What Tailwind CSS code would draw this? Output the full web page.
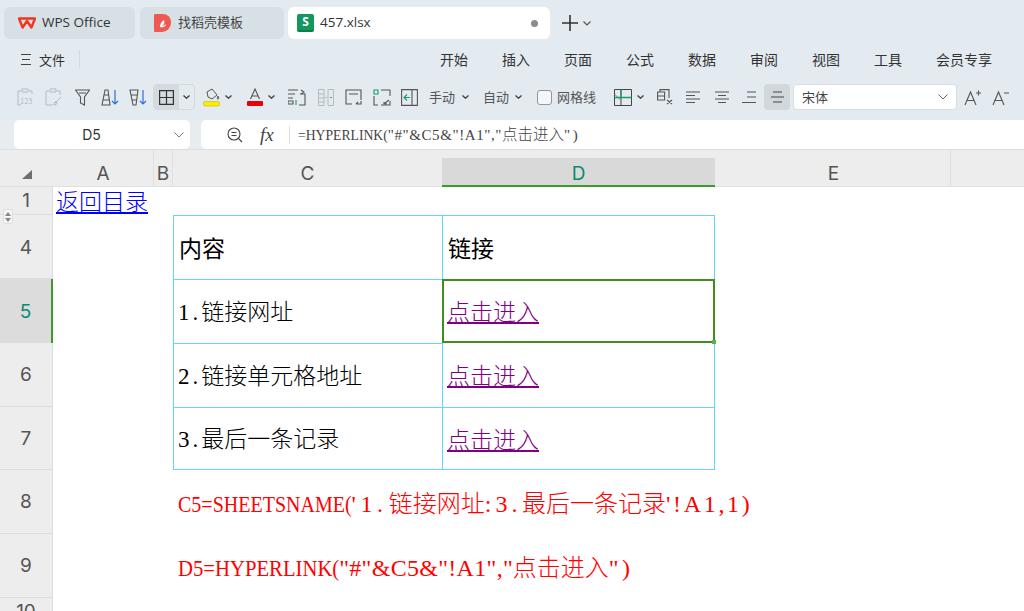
<!DOCTYPE html>
<html lang="zh-CN">

<head>
    <meta charset="UTF-8" />
    <title>457.xlsx</title>
    <script src="https://cdn.jsdelivr.net/npm/@tailwindcss/browser@4"></script>
</head>

<body class="w-[1024px] h-[611px] overflow-hidden bg-white font-['Noto_Sans_CJK_SC','Noto_Sans',sans-serif] text-[#333]">

    <!-- tab strip -->
    <div class="h-[120px] bg-[#e3ebf1]">
        <div class="flex items-center h-[46px] pt-[7px] pb-[7px] pl-[4px]">
            <div class="flex items-center w-[131px] h-[32px] rounded-[6px] bg-[#d7e0e4] pl-[14px]">
                <svg width="18" height="12" viewBox="0 0 18 12" fill="none" stroke="#f1361d" stroke-width="2.4">
                    <path d="M1 1.500h16l-3.600 9L9 4l-4.400 6.500z" stroke-linejoin="round" />
                </svg>
                <span class="ml-[6px] mb-[2px] font-['Open_Sans'] text-[13.500px] text-[#333]">WPS Office</span>
            </div>
            <div class="flex items-center w-[144px] h-[32px] rounded-[6px] bg-[#d7e0e4] ml-[5px] pl-[14px]">
                <svg width="17" height="18" viewBox="0 0 17 18">
                    <path d="M1 0h8a8 8 0 0 1 8 8v1a9 9 0 0 1-9 9H1a1 1 0 0 1-1-1V1a1 1 0 0 1 1-1z" fill="#ee5a52" />
                    <path d="M6 13c0-3 1-5 4-7 1 3 0 5-2 6 2 0 3-1 4-2 0 2-2 4-6 3z" fill="#fff" />
                </svg>
                <span class="ml-[7px] mb-[2px] text-[13px] text-[#444]">找稻壳模板</span>
            </div>
            <div class="flex items-center w-[262px] h-[32px] rounded-[6px] bg-white ml-[4px] pl-[9px]">
                <div class="flex items-center justify-center w-[17px] h-[18px] rounded-[2px] bg-[#14965f] border-b-2 border-[#0e7a4d] font-['Open_Sans'] text-[12px] font-bold text-white">S</div>
                <span class="ml-[6px] mb-[2px] font-['Open_Sans'] text-[13.500px] text-[#333]">457.xlsx</span>
                <span class="ml-[160px] w-[7px] h-[7px] rounded-full bg-[#8c8c8c]"></span>
            </div>
            <svg class="ml-[12px]" width="16" height="16" viewBox="0 0 16 16" stroke="#333" stroke-width="1.600">
                <path d="M8 0v16M0 8h16" />
            </svg>
            <svg class="ml-[5px]" width="8" height="5" viewBox="0 0 8 5" fill="none" stroke="#555" stroke-width="1.200">
                <path d="M.5.500 4 4 7.500.5" />
            </svg>
        </div>

        <!-- menu row -->
        <div class="flex items-center h-[26px] text-[14px] leading-none">
            <svg class="ml-[21px]" width="10" height="11" viewBox="0 0 10 11" stroke="#444">
                <path d="M0 .5h10M1 5.500h8M0 10.500h10" />
            </svg>
            <span class="ml-[8px] text-[13px]">文件</span>
            <div class="ml-[14px] w-px h-[18px] bg-[#d3dadf]"></div>
            <div class="flex gap-[34px] ml-[360px]">
                <span>开始</span><span>插入</span><span>页面</span><span>公式</span><span>数据</span><span>审阅</span><span>视图</span><span>工具</span><span>会员专享</span>
            </div>
        </div>

        <!-- toolbar -->
        <div class="flex items-center h-[28px] mt-[11px] pl-[17px]">
            <svg width="16" height="18" viewBox="0 0 16 18" fill="none" stroke="#b4bbbf">
                <path d="M4 3H1v14h3M12 3h3v3M5 1h6v3H5z" />
                <text x="3" y="16" font-size="7.500" fill="#b4bbbf" stroke="none">123</text>
            </svg>
            <svg class="ml-[12px]" width="18" height="18" viewBox="0 0 18 18" fill="none" stroke="#b4bbbf">
                <path d="M4 3H1v14h7M12 3h3v4M5 1h6v3H5zM10 15l6-6M9 17c2 0 3-1 3-2l-1.500-1.500C9.500 14 9.500 16 9 17z" />
            </svg>
            <svg class="ml-[12px]" width="15" height="17" viewBox="0 0 15 17" fill="none" stroke="#555" stroke-width="1.100">
                <path d="M.5 1h14l-5 7v8l-4-2V8zM4 4h7" />
            </svg>
            <svg class="ml-[11px]" width="18" height="17" viewBox="0 0 18 17" fill="none">
                <path d="M4 1h3l2 15H1zM3 6h5M2 11h7" stroke="#555" stroke-width="1.100" />
                <path d="M14 1v14M11 12l3 3 3-3" stroke="#2f6fdb" stroke-width="1.200" />
            </svg>
            <svg class="ml-[10px]" width="18" height="17" viewBox="0 0 18 17" fill="none">
                <path d="M1 1h8L7 16H4zM2 6h6M3 11h5" stroke="#555" stroke-width="1.100" />
                <path d="M14 1v14M11 12l3 3 3-3" stroke="#2f6fdb" stroke-width="1.200" />
            </svg>

            <div class="flex ml-[6px] w-[42px] h-[26px] rounded-[4px] border border-[#d3dbdf]">
                <div class="flex items-center justify-center w-[25px] bg-[#d3dbdf] rounded-l-[3px]">
                    <svg width="15" height="15" viewBox="0 0 15 15" fill="none" stroke="#333" stroke-width="1.200">
                        <path d="M.6.6h13.800v13.800H.6zM7.500.6v13.800M.6 7.500h13.800" />
                    </svg>
                </div>
                <div class="flex flex-1 items-center justify-center">
                    <svg width="7" height="4" viewBox="0 0 7 4" fill="none" stroke="#444" stroke-width="1.400"><path d="M.5.500 3.500 3.200 6.500.5" /></svg>
                </div>
            </div>

            <svg class="ml-[8px]" width="17" height="19" viewBox="0 0 17 19" fill="none">
                <path d="M4 4 9 1l5 6-5 4-4-2zM15 8c1 2 1 3 0 3s-1-1 0-3z" stroke="#555" />
                <rect x=".5" y="13.500" width="16" height="4.500" rx="1.500" fill="#ffeb00" stroke="#c9b900" stroke-width=".6" />
            </svg>
            <svg class="ml-[5px]" width="7" height="4" viewBox="0 0 7 4" fill="none" stroke="#444" stroke-width="1.400"><path d="M.5.500 3.500 3.200 6.500.5" /></svg>
            <svg class="ml-[15px]" width="16" height="18" viewBox="0 0 16 18" fill="none">
                <path d="M3.500 11 8 1l4.500 10M5 8h6" stroke="#555" stroke-width="1.100" />
                <rect y="13" width="16" height="5" rx="1" fill="#e8000b" />
            </svg>
            <svg class="ml-[5px]" width="7" height="4" viewBox="0 0 7 4" fill="none" stroke="#444" stroke-width="1.400"><path d="M.5.500 3.500 3.200 6.500.5" /></svg>

            <svg class="ml-[13px]" width="18" height="17" viewBox="0 0 18 17" fill="none" stroke="#555" stroke-width="1.100">
                <path d="M0 1h10M0 5h7M0 9h5M0 15h5v-3H0zM12 5h5v11h-6M13 1l3 2-3 2" />
                <path d="M8 11v5" stroke="#1f9a63" />
            </svg>
            <svg class="ml-[12px]" width="16" height="17" viewBox="0 0 16 17" fill="none" stroke="#b4bbbf">
                <path d="M.5.5h5.500v16H.5zM10 .5h5.500v16H10zM1 5h5M1 9h5M1 13h5M7 8.500h2" />
                <path d="M12 8.500h2" stroke="#3ca36c" />
            </svg>
            <svg class="ml-[11px]" width="17" height="17" viewBox="0 0 17 17" fill="none" stroke="#555" stroke-width="1.100">
                <path d="M7 15H1V1h15v10M4 5h9M11 15h5v-3M11 15l2-2" />
            </svg>
            <svg class="ml-[11px]" width="18" height="17" viewBox="0 0 18 17" fill="none" stroke="#555" stroke-width="1.100">
                <path d="M8 1h9v6M17 12v4H8M1 7v9h4" />
                <path d="M1 1h4v4H1z" stroke="#1f9a63" />
                <path d="M11 15l5-4M14 15h-3v-2" />
            </svg>
            <svg class="ml-[10px]" width="17" height="17" viewBox="0 0 17 17" fill="none" stroke="#555" stroke-width="1.100">
                <path d="M.6.6h15.800v15.800H.6zM11 .6v15.800" />
                <path d="M9 8.500H3M6 5.500l-3 3 3 3" stroke="#1f9a63" />
            </svg>

            <span class="ml-[11px] w-[27px] text-[13px] text-[#555] whitespace-nowrap">手动</span>
            <svg class="ml-[6px]" width="7" height="4" viewBox="0 0 7 4" fill="none" stroke="#444" stroke-width="1.400"><path d="M.5.500 3.500 3.200 6.500.5" /></svg>
            <span class="ml-[14px] w-[27px] text-[13px] text-[#555] whitespace-nowrap">自动</span>
            <svg class="ml-[5px]" width="7" height="4" viewBox="0 0 7 4" fill="none" stroke="#444" stroke-width="1.400"><path d="M.5.500 3.500 3.200 6.500.5" /></svg>
            <div class="ml-[15px] w-[15px] h-[15px] rounded-[3px] border border-[#8f969a] bg-[#f4f7f9]"></div>
            <span class="ml-[5px] w-[40px] text-[13px] text-[#555] whitespace-nowrap">网格线</span>

            <svg class="ml-[17px]" width="18" height="17" viewBox="0 0 18 17" fill="none" stroke="#444">
                <path d="M.5.500h17v16H.5zM7 .5v16" />
                <path d="M.5 5l6 6" stroke="#888" />
                <path d="M.5 8.500h17M7 .5v8" stroke="#1f9a63" stroke-width="1.300" />
            </svg>
            <svg class="ml-[5px]" width="7" height="4" viewBox="0 0 7 4" fill="none" stroke="#444" stroke-width="1.400"><path d="M.5.500 3.500 3.200 6.500.5" /></svg>
            <svg class="ml-[13px]" width="16" height="16" viewBox="0 0 16 16" fill="none" stroke="#555" stroke-width="1.100">
                <path d="M3 3V.6h9V9M.6 3h7v8h-7zM.6 7h7M10 11l5 4M15 11l-5 4" />
            </svg>
            <svg class="ml-[13px]" width="14" height="12" viewBox="0 0 14 12" stroke="#555" stroke-width="1.100">
                <path d="M0 1h14M0 4.500h9M0 8h14M0 11.500h9" />
            </svg>
            <svg class="ml-[15px]" width="14" height="12" viewBox="0 0 14 12" stroke="#555" stroke-width="1.100">
                <path d="M0 1h14M3 4.500h8M0 8h14M3 11.500h8" />
            </svg>
            <svg class="ml-[13px]" width="14" height="12" viewBox="0 0 14 12" stroke="#555" stroke-width="1.100">
                <path d="M5 1h9M5 6h9M0 11.500h14" />
            </svg>
            <div class="flex items-center justify-center ml-[8px] w-[26px] h-[26px] rounded-[4px] bg-[#d0d8dc]">
                <svg width="13" height="12" viewBox="0 0 13 12" stroke="#444" stroke-width="1.100">
                    <path d="M2 1h9M0 6h13M2 11h9" />
                </svg>
            </div>
            <div class="flex items-center justify-between ml-[3px] w-[164px] h-[26px] rounded-[4px] border border-[#d8dfe3] bg-white pl-[8px] pr-[8px] text-[13px] text-[#444]">
                <span>宋体</span>
                <svg width="10" height="6" viewBox="0 0 10 6" fill="none" stroke="#666">
                    <path d="M.5.500 5 5 9.500.5" />
                </svg>
            </div>
            <svg class="ml-[7px]" width="17" height="17" viewBox="0 0 17 17" fill="none" stroke="#555" stroke-width="1.100">
                <path d="M1 16 6.500 3 12 16M3 11.500h7M12 4h5M14.500 1.500v5" />
            </svg>
            <svg class="ml-[11px]" width="17" height="17" viewBox="0 0 17 17" fill="none" stroke="#555" stroke-width="1.100">
                <path d="M1 16 6.500 3 12 16M3 11.500h7M12 4h5" />
            </svg>
        </div>
    </div>

    <!-- name box and formula bar -->
    <div class="flex h-[30px] pl-[14px] bg-[#e6ecf0] border-b border-[#dcdfe0]">
        <div class="flex items-center w-[176px] h-[29px] rounded-[5px] bg-white pr-[6px]">
            <span class="flex-1 text-center font-['Inter'] text-[14px] text-[#333] pr-[5px]">D5</span>
            <svg width="10" height="6" viewBox="0 0 10 6" fill="none" stroke="#777">
                <path d="M.5.500 5 5 9.500.5" />
            </svg>
        </div>
        <div class="flex flex-1 items-center h-[29px] ml-[11px] rounded-l-[5px] bg-white">
            <svg class="ml-[26px]" width="16" height="16" viewBox="0 0 16 16" fill="none" stroke="#444" stroke-width="1.100">
                <circle cx="7" cy="7" r="6" />
                <path d="M4.500 5.500h5M4.500 8.500h5M11.500 11.500l3.500 3.500" />
            </svg>
            <span class="ml-[17px] w-[16px] font-['Liberation_Serif'] italic text-[19px] leading-none text-[#444] whitespace-nowrap">fx</span>
            <div class="ml-[13px] w-px h-[18px] bg-[#e0e0e0]"></div>
            <div class="ml-[8px] font-['Liberation_Serif'] text-[15px] text-[#444] whitespace-nowrap"><span class="inline-block w-[89.800px] origin-left scale-x-[.912]">=HYPERLINK(</span><span class="inline-block w-[114.200px] tracking-[.58px]">"#"&amp;C5&amp;"!A1","</span><span class="font-['Noto_Sans_CJK_SC'] text-[15.500px] font-light">点击进入</span><span class="inline-block tracking-[2.600px]">")</span></div>
        </div>
    </div>

    <!-- sheet -->
    <div class="grid grid-cols-[53px_101px_19px_269px_273px_236px_1fr] grid-rows-[37px_28px_64px_64px_64px_63px_64px_64px_13px] text-[23px] font-light leading-none text-black">
        <!-- column headers -->
        <div class="flex items-end justify-center pb-[7px] bg-[#ededed] border-b border-[#e0e0e0]">
            <svg width="10" height="9" viewBox="0 0 10 9" fill="#6e6e6e"><path d="M10 0v9H0z" /></svg>
        </div>
        <div class="flex items-end justify-center bg-[#ededed] border-b border-r border-[#e0e0e0] pb-[3px] font-['Inter'] font-normal text-[19px] text-[#555]">A</div>
        <div class="flex items-end justify-center bg-[#ededed] border-b border-r border-[#e0e0e0] pb-[3px] font-['Inter'] font-normal text-[19px] text-[#555]">B</div>
        <div class="flex items-end justify-center bg-[#ededed] border-b border-[#e0e0e0] pb-[3px] font-['Inter'] font-normal text-[19px] text-[#555]">C</div>
        <div class="flex flex-col justify-end bg-[#ededed]">
            <div class="flex items-end justify-center h-[29px] pb-[2px] bg-[#d9d9d9] border-b-2 border-[#3f9a2e] font-['Inter'] font-normal text-[19px] text-[#0b8a76]">D</div>
        </div>
        <div class="flex items-end justify-center pl-[2px] bg-[#ededed] border-b border-r border-[#e0e0e0] pb-[3px] font-['Inter'] font-normal text-[19px] text-[#555]">E</div>
        <div class="bg-[#ededed] border-b border-[#e0e0e0]"></div>

        <!-- row 1 -->
        <div class="relative flex items-center justify-center bg-[#ededed] border-r border-b border-[#dcdcdc] font-['Inter'] font-normal text-[19px] text-[#555]">1
            <div class="absolute left-[3px] top-[22px] flex flex-col items-center justify-center gap-[2px] w-[10px] h-[15px] rounded-[2px] bg-[#f6f6f6] border border-[#dedede]">
                <svg width="6" height="4" viewBox="0 0 6 4" fill="#888"><path d="M3 0l3 4H0z" /></svg>
                <svg width="6" height="4" viewBox="0 0 6 4" fill="#888"><path d="M0 0h6L3 4z" /></svg>
            </div>
        </div>
        <div class="pl-[3px] pt-[2px] col-span-6 text-[#0000ff] whitespace-nowrap"><span class="underline underline-offset-[2px]">返回目录</span></div>

        <!-- row 4 -->
        <div class="flex items-center justify-center pt-[1px] bg-[#ededed] border-r border-b border-[#dcdcdc] font-['Inter'] font-normal text-[19px] text-[#555]">4</div>
        <div class="col-span-2"></div>
        <div class="flex items-center pl-[5px] border-t border-l border-[#62d6fb] font-normal">内容</div>
        <div class="flex items-center pl-[5px] border-t border-l border-r border-[#62d6fb] font-normal">链接</div>
        <div class="col-span-2"></div>

        <!-- row 5 -->
        <div class="flex items-center justify-center bg-[#dcdcdc] border-r-2 border-[#3f9a2e] font-['Inter'] font-normal text-[19px] text-[#0b8a76]">5</div>
        <div class="col-span-2"></div>
        <div class="flex items-center pl-[4px] pb-[1px] border-t border-l border-[#62d6fb]"><div><span class="font-['Liberation_Serif'] font-normal tracking-[3px]">1.</span>链接网址</div></div>
        <div class="relative flex items-center pl-[3px] pb-[2px] border-2 border-[#3f8f1f] text-[#800080]"><span class="underline underline-offset-[2px]">点击进入</span>
            <div class="absolute right-[-3px] bottom-[-3px] w-[4px] h-[4px] bg-[#6aa84f]"></div>
        </div>
        <div class="col-span-2"></div>

        <!-- row 6 -->
        <div class="flex items-center justify-center bg-[#ededed] border-r border-b border-[#dcdcdc] font-['Inter'] font-normal text-[19px] text-[#555]">6</div>
        <div class="col-span-2"></div>
        <div class="flex items-center pl-[4px] pb-[1px] border-t border-l border-[#62d6fb]"><div><span class="font-['Liberation_Serif'] font-normal tracking-[3px]">2.</span>链接单元格地址</div></div>
        <div class="flex items-center pl-[4px] pb-[2px] border-l border-r border-[#62d6fb] text-[#800080]"><span class="underline underline-offset-[2px]">点击进入</span></div>
        <div class="col-span-2"></div>

        <!-- row 7 -->
        <div class="flex items-center justify-center bg-[#ededed] border-r border-b border-[#dcdcdc] font-['Inter'] font-normal text-[19px] text-[#555]">7</div>
        <div class="col-span-2"></div>
        <div class="flex items-center pl-[4px] border-t border-l border-b border-[#62d6fb]"><div><span class="font-['Liberation_Serif'] font-normal tracking-[3px]">3.</span>最后一条记录</div></div>
        <div class="flex items-center pl-[4px] pb-[1px] border-t border-l border-r border-b border-[#62d6fb] text-[#800080]"><span class="underline underline-offset-[2px]">点击进入</span></div>
        <div class="col-span-2"></div>

        <!-- row 8 -->
        <div class="flex items-center justify-center bg-[#ededed] border-r border-b border-[#dcdcdc] font-['Inter'] font-normal text-[19px] text-[#555]">8</div>
        <div class="col-span-2"></div>
        <div class="col-span-4 flex items-center pl-[5px] pt-[2px] text-[#ff0000] text-[24px] whitespace-nowrap">
            <div class="font-['Noto_Sans_CJK_SC']"><span class="inline-block w-[173.600px] origin-left scale-x-[.834] font-['Liberation_Serif'] font-normal">C5=SHEETSNAME(</span><span class="inline-block w-[37.200px] tracking-[4.500px] font-['Liberation_Serif'] font-normal">'1.</span>链接网址<span class="inline-block w-[37.200px] tracking-[4px] font-['Liberation_Serif'] font-normal">:3.</span>最后一条记录<span class="inline-block w-[86.800px] tracking-[2.700px] font-['Liberation_Serif'] font-normal">'!A1,1)</span></div>
        </div>

        <!-- row 9 -->
        <div class="flex items-center justify-center bg-[#ededed] border-r border-b border-[#dcdcdc] font-['Inter'] font-normal text-[19px] text-[#555]">9</div>
        <div class="col-span-2"></div>
        <div class="col-span-4 flex items-center pl-[5px] pt-[2px] text-[#ff0000] text-[24px] whitespace-nowrap">
            <div class="font-['Noto_Sans_CJK_SC']"><span class="inline-block w-[161.200px] origin-left scale-x-[.863] font-['Liberation_Serif'] font-normal">D5=HYPERLINK(</span><span class="inline-block w-[173.600px] tracking-[.3px] font-['Liberation_Serif'] font-normal">"#"&amp;C5&amp;"!A1","</span>点击进入<span class="inline-block w-[24.800px] tracking-[3.500px] font-['Liberation_Serif'] font-normal">")</span></div>
        </div>

        <!-- row 10 -->
        <div class="flex justify-center pt-[4px] bg-[#ededed] border-r border-[#dcdcdc] font-['Inter'] font-normal text-[19px] text-[#555] overflow-hidden">10</div>
    </div>
</body>

</html>
